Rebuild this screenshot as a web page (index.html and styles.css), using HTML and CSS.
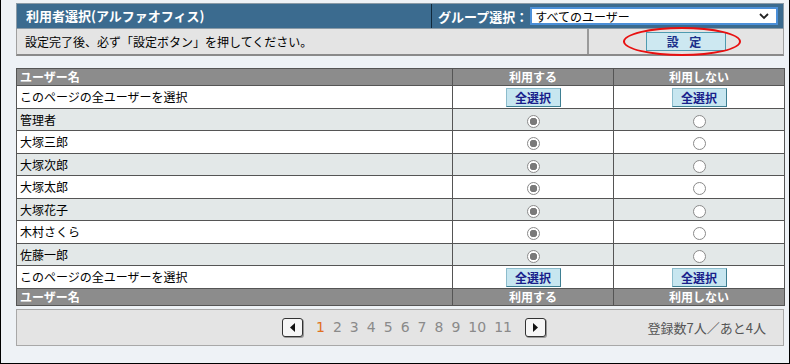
FILE: index.html
```html
<!DOCTYPE html>
<html lang="ja">
<head>
    <meta charset="UTF-8">
    <meta name="viewport" content="width=device-width, initial-scale=1.0">
    <title>利用者選択</title>
    <link rel="stylesheet" href="styles.css">
</head>
<body>
    <div class="frame">
        <div class="head">
            <div class="head-title">利用者選択(アルファオフィス)</div>
            <div class="head-group">
                <span>グループ選択：</span>
                <div class="select">
                    すべてのユーザー
                    <svg width="12" height="8" viewBox="0 0 12 8"><path d="M2 2 L6 6 L10 2" fill="none" stroke="#222" stroke-width="1.8"/></svg>
                </div>
            </div>
        </div>
        <div class="notice">
            <div class="notice-text">設定完了後、必ず「設定ボタン」を押してください。</div>
            <div class="notice-btn">
                <button class="btn-set">設 定</button>
                <span class="ring"></span>
            </div>
        </div>

        <table class="users">
            <tr class="th">
                <td class="name">ユーザー名</td>
                <td>利用する</td>
                <td>利用しない</td>
            </tr>
            <tr>
                <td class="name">このページの全ユーザーを選択</td>
                <td><button class="btn-all">全選択</button></td>
                <td><button class="btn-all">全選択</button></td>
            </tr>
            <tr class="alt">
                <td class="name">管理者</td>
                <td><span class="radio on"></span></td>
                <td><span class="radio"></span></td>
            </tr>
            <tr>
                <td class="name">大塚三郎</td>
                <td><span class="radio on"></span></td>
                <td><span class="radio"></span></td>
            </tr>
            <tr class="alt">
                <td class="name">大塚次郎</td>
                <td><span class="radio on"></span></td>
                <td><span class="radio"></span></td>
            </tr>
            <tr>
                <td class="name">大塚太郎</td>
                <td><span class="radio on"></span></td>
                <td><span class="radio"></span></td>
            </tr>
            <tr class="alt">
                <td class="name">大塚花子</td>
                <td><span class="radio on"></span></td>
                <td><span class="radio"></span></td>
            </tr>
            <tr>
                <td class="name">木村さくら</td>
                <td><span class="radio on"></span></td>
                <td><span class="radio"></span></td>
            </tr>
            <tr class="alt">
                <td class="name">佐藤一郎</td>
                <td><span class="radio on"></span></td>
                <td><span class="radio"></span></td>
            </tr>
            <tr>
                <td class="name">このページの全ユーザーを選択</td>
                <td><button class="btn-all">全選択</button></td>
                <td><button class="btn-all">全選択</button></td>
            </tr>
            <tr class="th">
                <td class="name">ユーザー名</td>
                <td>利用する</td>
                <td>利用しない</td>
            </tr>
        </table>

        <div class="pager">
            <div></div>
            <div class="pages">
                <span class="arrow"><svg width="6" height="9" viewBox="0 0 6 9"><path d="M5 0 L0 4.5 L5 9 Z" fill="#111"/></svg></span>
                <span class="cur">1</span>
                <span>2</span>
                <span>3</span>
                <span>4</span>
                <span>5</span>
                <span>6</span>
                <span>7</span>
                <span>8</span>
                <span>9</span>
                <span>10</span>
                <span>11</span>
                <span class="arrow"><svg width="6" height="9" viewBox="0 0 6 9"><path d="M1 0 L6 4.5 L1 9 Z" fill="#111"/></svg></span>
            </div>
            <div class="count">登録数7人／あと4人</div>
        </div>
    </div>
</body>
</html>
```

FILE: styles.css
```css
html, body {
    margin: 0;
    padding: 0;
}

body {
    font-family: "Noto Sans CJK JP", "DejaVu Sans", sans-serif;
    font-size: 12px;
    color: #000;
    background-color: #eef2f6;
}

.frame {
    box-sizing: border-box;
    width: 790px;
    height: 364px;
    padding: 3px 5px 0 15px;
    border-left: 1px solid #000;
    border-right: 1px solid #000;
    border-bottom: 1px solid #000;
}

.head {
    display: flex;
    height: 24px;
    background-color: #3b6b8f;
    border: 1px solid #8a9aa6;
    color: #fff;
    font-weight: bold;
    font-size: 13px;
}

.head-title {
    width: 405px;
    padding-left: 9px;
    line-height: 24px;
    border-right: 1px solid #10283a;
}

.head-group {
    flex: 1;
    display: flex;
    align-items: center;
    padding-left: 6px;
}

.select {
    box-sizing: border-box;
    width: 248px;
    height: 18px;
    margin-left: 2px;
    padding: 0 6px 0 3px;
    display: flex;
    align-items: center;
    justify-content: space-between;
    background-color: #fff;
    border: 2px solid #4b8fd8;
    color: #000;
    font-weight: normal;
    font-size: 12px;
}

.notice {
    display: flex;
    height: 25px;
    background-color: #e4e4e4;
    border: 1px solid #a0a0a0;
    border-bottom: 2px solid #8a8a8a;
    border-top: none;
}

.notice-text {
    width: 562px;
    padding-left: 8px;
    line-height: 25px;
    border-right: 2px solid #9a9a9a;
}

.notice-btn {
    flex: 1;
    position: relative;
    display: flex;
    align-items: center;
    justify-content: center;
}

.btn-set {
    width: 80px;
    height: 19px;
    padding: 0;
    background-color: #cde8f1;
    border: 1px solid #4f9bb0;
    color: #1a2f8a;
    font-family: inherit;
    font-weight: bold;
    font-size: 12px;
    letter-spacing: 4px;
}

.ring {
    position: absolute;
    left: 34px;
    top: -2px;
    width: 114px;
    height: 25px;
    border: 2px solid #e81010;
    border-radius: 50%;
}

.users {
    width: 769px;
    margin-top: 12px;
    border-collapse: collapse;
    border: 1px solid #555;
}

.users td {
    height: 21.5px;
    padding: 0;
    border: 1px solid #555;
    text-align: center;
    background-color: #fff;
}

.users td.name {
    width: 432px;
    padding-left: 3px;
    text-align: left;
}

.users td:nth-child(2) {
    width: 160px;
}

.users tr.alt td {
    background-color: #e3e8e8;
}

.users tr.th td {
    height: 16px;
    background-color: #8c8c8c;
    color: #fff;
    font-weight: bold;
    line-height: 16px;
}

.btn-all {
    width: 55px;
    height: 19px;
    padding: 0;
    vertical-align: middle;
    background-color: #c7e6f0;
    border: 1px solid #8cbccc;
    border-right-color: #3e7f92;
    border-bottom-color: #3e7f92;
    color: #1a1f8c;
    font-family: inherit;
    font-weight: bold;
    font-size: 12px;
}

.radio {
    display: inline-block;
    box-sizing: border-box;
    width: 13px;
    height: 13px;
    vertical-align: middle;
    border: 1px solid #8a8a8a;
    border-radius: 50%;
    background-color: #fff;
}

.radio.on {
    background: radial-gradient(circle, #7a7a7a 0 3.5px, #fff 4px);
}

.pager {
    box-sizing: border-box;
    height: 37px;
    margin-top: 3px;
    display: grid;
    grid-template-columns: 1fr auto 1fr;
    align-items: center;
    background-color: #e4e4e4;
    border: 1px solid #a8a8a8;
}

.pages {
    display: flex;
    align-items: center;
    gap: 8px;
    padding-left: 28px;
    color: #8a8a8a;
    font-family: "DejaVu Sans", sans-serif;
    font-size: 14px;
}

.pages .cur {
    color: #e07020;
}

.pages .arrow {
    box-sizing: border-box;
    width: 21px;
    height: 19px;
    margin: 0 5px;
    display: flex;
    align-items: center;
    justify-content: center;
    background-color: #f6f6f6;
    border: 1px solid #333;
    border-radius: 3px;
    box-shadow: 1px 1px 0 #999;
}

.count {
    padding-right: 17px;
    text-align: right;
    color: #555;
    font-size: 13px;
}
```
